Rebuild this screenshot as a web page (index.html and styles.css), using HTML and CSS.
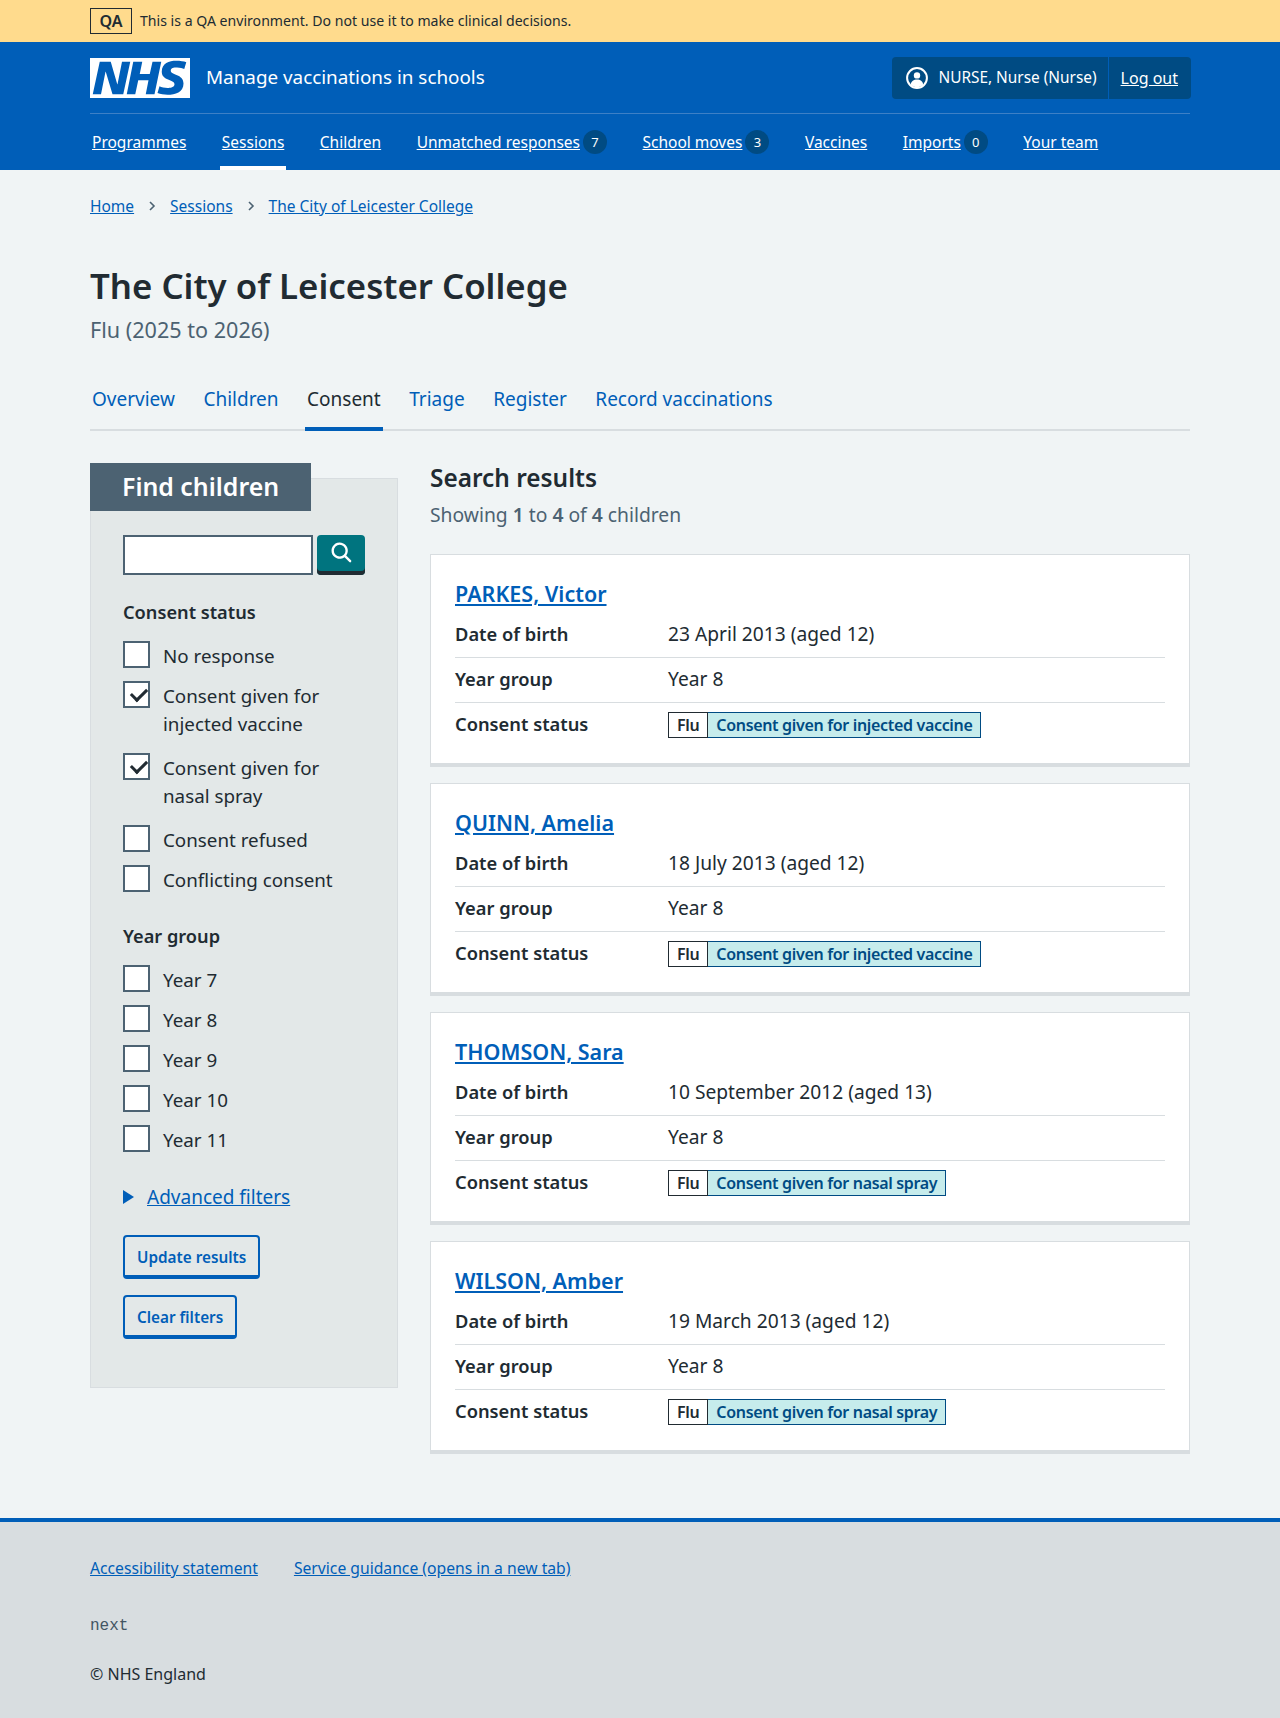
FILE: index.html
```html
<!DOCTYPE html>
<html lang="en">
<head>
<meta charset="utf-8">
<title>The City of Leicester College</title>
<link rel="stylesheet" href="styles.css">
</head>
<body>
<div class="env"><div class="wrap env-in"><strong class="env-tag">QA</strong><span class="env-text">This is a QA environment. Do not use it to make clinical decisions.</span></div></div>
<header class="head">
  <div class="wrap">
    <div class="head-top">
      <a class="brand" href="#">
        <svg class="logo" viewBox="0 0 40 16" aria-label="NHS"><path fill="#fff" d="M0 0h40v16H0z"/><path fill="#005eb8" d="M3.9 1.5h4.4l2.6 9h.1l1.8-9h3.3l-2.8 13H9l-2.7-9h-.1l-1.8 9H1.1M17.3 1.5h3.6l-1 4.9h4L25 1.5h3.5l-2.7 13h-3.5l1.1-5.6h-4.1l-1.2 5.6h-3.4M37.7 4.4c-.7-.3-1.6-.6-2.9-.6-1.4 0-2.5.2-2.5 1.3 0 1.8 5.1 1.2 5.1 5.1 0 3.6-3.3 4.5-6.4 4.5-1.3 0-2.9-.3-4-.7l.8-2.7c.7.4 2.1.7 3.2.7s2.8-.2 2.8-1.5c0-2.1-5.1-1.3-5.1-5 0-3.4 2.9-4.4 5.8-4.4 1.6 0 3.1.2 4 .6"/></svg>
        <span class="brand-name">Manage vaccinations in schools</span>
      </a>
      <div class="account">
        <span class="account-user">
          <svg class="user-icon" viewBox="0 0 22 22"><circle cx="11" cy="11" r="9.9" fill="none" stroke="#fff" stroke-width="2"/><circle cx="11" cy="8.4" r="3.2" fill="#fff"/><path fill="#fff" d="M4.8 17.6c.4-3.4 3-5 6.2-5s5.800 1.600 6.200 5c-1.600 1.700-3.800 2.700-6.200 2.700s-4.600-1-6.200-2.700z"/></svg>
          NURSE, Nurse (Nurse)
        </span>
        <a class="account-link" href="#">Log out</a>
      </div>
    </div>
    <nav class="nav">
      <a class="nav-item" href="#"><span class="nav-text">Programmes</span></a>
      <a class="nav-item is-active" href="#"><span class="nav-text">Sessions</span></a>
      <a class="nav-item" href="#"><span class="nav-text">Children</span></a>
      <a class="nav-item" href="#"><span class="nav-text">Unmatched responses</span><span class="count">7</span></a>
      <a class="nav-item" href="#"><span class="nav-text">School moves</span><span class="count">3</span></a>
      <a class="nav-item" href="#"><span class="nav-text">Vaccines</span></a>
      <a class="nav-item" href="#"><span class="nav-text">Imports</span><span class="count">0</span></a>
      <a class="nav-item" href="#"><span class="nav-text">Your team</span></a>
    </nav>
  </div>
</header>
<div class="wrap">
  <nav class="crumbs">
    <a href="#">Home</a><svg class="crumb-sep" viewBox="0 0 8 12"><path d="M2 2l4 4-4 4" fill="none" stroke="#4c6272" stroke-width="1.6"/></svg>
    <a href="#">Sessions</a><svg class="crumb-sep" viewBox="0 0 8 12"><path d="M2 2l4 4-4 4" fill="none" stroke="#4c6272" stroke-width="1.6"/></svg>
    <a href="#">The City of Leicester College</a>
  </nav>
  <main>
    <h1 class="title">The City of Leicester College</h1>
    <p class="subtitle">Flu (2025 to 2026)</p>
    <nav class="tabs">
      <a class="tab" href="#">Overview</a>
      <a class="tab" href="#">Children</a>
      <a class="tab is-current" href="#">Consent</a>
      <a class="tab" href="#">Triage</a>
      <a class="tab" href="#">Register</a>
      <a class="tab" href="#">Record vaccinations</a>
    </nav>
    <div class="layout">
      <aside class="filters">
        <h2 class="filters-title">Find children</h2>
        <div class="filters-body">
          <div class="search">
            <input class="search-input" type="text" aria-label="Search">
            <button class="search-btn" aria-label="Search"><svg viewBox="0 0 24 24"><path fill="#fff" d="M19.710 18.290l-4.110-4.100a7 7 0 1 0-1.410 1.410l4.100 4.110a1 1 0 0 0 1.420 0 1 1 0 0 0 0-1.420zM5 10a5 5 0 1 1 5 5 5 5 0 0 1-5-5z"/></svg></button>
          </div>
          <h3 class="group-title">Consent status</h3>
          <div class="checks">
            <label class="check"><span class="box"></span><span class="check-label">No response</span></label>
            <label class="check check-long"><span class="box is-on"></span><span class="check-label">Consent given for injected vaccine</span></label>
            <label class="check check-long"><span class="box is-on"></span><span class="check-label">Consent given for nasal spray</span></label>
            <label class="check"><span class="box"></span><span class="check-label">Consent refused</span></label>
            <label class="check"><span class="box"></span><span class="check-label">Conflicting consent</span></label>
          </div>
          <h3 class="group-title group-second">Year group</h3>
          <div class="checks">
            <label class="check"><span class="box"></span><span class="check-label">Year 7</span></label>
            <label class="check"><span class="box"></span><span class="check-label">Year 8</span></label>
            <label class="check"><span class="box"></span><span class="check-label">Year 9</span></label>
            <label class="check"><span class="box"></span><span class="check-label">Year 10</span></label>
            <label class="check"><span class="box"></span><span class="check-label">Year 11</span></label>
          </div>
          <div class="advanced"><span class="arrow"></span><a href="#">Advanced filters</a></div>
          <a class="btn btn-first" href="#">Update results</a>
          <a class="btn" href="#">Clear filters</a>
        </div>
      </aside>
      <section class="results">
        <h2 class="results-title">Search results</h2>
        <p class="results-count">Showing <b>1</b> to <b>4</b> of <b>4</b> children</p>
        <article class="card">
          <h3 class="card-name"><a href="#">PARKES, Victor</a></h3>
          <dl class="rows">
            <div class="row"><dt>Date of birth</dt><dd>23 April 2013 (aged 12)</dd></div>
            <div class="row"><dt>Year group</dt><dd>Year 8</dd></div>
            <div class="row row-last"><dt>Consent status</dt><dd><span class="tag-pair"><span class="tag-a">Flu</span><span class="tag-b">Consent given for injected vaccine</span></span></dd></div>
          </dl>
        </article>
        <article class="card">
          <h3 class="card-name"><a href="#">QUINN, Amelia</a></h3>
          <dl class="rows">
            <div class="row"><dt>Date of birth</dt><dd>18 July 2013 (aged 12)</dd></div>
            <div class="row"><dt>Year group</dt><dd>Year 8</dd></div>
            <div class="row row-last"><dt>Consent status</dt><dd><span class="tag-pair"><span class="tag-a">Flu</span><span class="tag-b">Consent given for injected vaccine</span></span></dd></div>
          </dl>
        </article>
        <article class="card">
          <h3 class="card-name"><a href="#">THOMSON, Sara</a></h3>
          <dl class="rows">
            <div class="row"><dt>Date of birth</dt><dd>10 September 2012 (aged 13)</dd></div>
            <div class="row"><dt>Year group</dt><dd>Year 8</dd></div>
            <div class="row row-last"><dt>Consent status</dt><dd><span class="tag-pair"><span class="tag-a">Flu</span><span class="tag-b">Consent given for nasal spray</span></span></dd></div>
          </dl>
        </article>
        <article class="card">
          <h3 class="card-name"><a href="#">WILSON, Amber</a></h3>
          <dl class="rows">
            <div class="row"><dt>Date of birth</dt><dd>19 March 2013 (aged 12)</dd></div>
            <div class="row"><dt>Year group</dt><dd>Year 8</dd></div>
            <div class="row row-last"><dt>Consent status</dt><dd><span class="tag-pair"><span class="tag-a">Flu</span><span class="tag-b">Consent given for nasal spray</span></span></dd></div>
          </dl>
        </article>
      </section>
    </div>
  </main>
</div>
<footer class="foot">
  <div class="wrap">
    <div class="foot-links"><a href="#">Accessibility statement</a><a href="#">Service guidance (opens in a new tab)</a></div>
    <p class="foot-version">next</p>
    <p class="foot-copy">© NHS England</p>
  </div>
</footer>
</body>
</html>
```
FILE: styles.css
```css
* { box-sizing: border-box; }
html, body { margin: 0; padding: 0; }
body {
  background: #f0f4f5;
  color: #212b32;
  font-family: "Noto Sans", "Open Sans", sans-serif;
  font-size: 19.2px;
  line-height: 24px;
}
a { color: #005eb8; }
.wrap { width: 1100px; margin: 0 auto; }

.env { background: #ffdb8d; height: 42px; }
.env-in { display: flex; align-items: center; height: 42px; }
.env-tag { border: 1px solid #212b32; width: 42px; height: 26px; line-height: 24px; text-align: center; font-size: 16px; font-weight: 600; }
.env-text { margin-left: 8px; font-size: 14.1px; color: #212b32; }

.head { background: #005eb8; height: 128px; color: #fff; }
.head a { color: #fff; }
.head-top { display: flex; align-items: center; justify-content: space-between; height: 72px; border-bottom: 1px solid #3d80c6; padding-top: 15px; padding-bottom: 14px; }
.brand { display: flex; align-items: center; text-decoration: none; }
.logo { width: 100px; height: 40px; display: block; }
.brand-name { margin-left: 16px; margin-bottom: 2px; font-size: 18.85px; }
.account { display: flex; align-items: center; height: 42px; margin-right: -1px; background: #004b83; border-radius: 4px; font-size: 16px; }
.account-user { display: flex; align-items: center; gap: 10px; height: 42px; padding: 0 11px 0 14px; border-right: 1px solid #005eb8; font-size: 15.4px; }
.user-icon { width: 22px; height: 22px; display: block; }
.account-link { padding: 0 13px 0 12px; }

.nav { display: flex; height: 56px; }
.nav-item { display: flex; align-items: center; gap: 3px; height: 56px; padding: 0 2px; margin-right: 31.5px; font-size: 15.5px; position: relative; text-decoration: none; }
.nav-text { text-decoration: underline; }
.nav-item.is-active::after { content: ""; position: absolute; left: 0; right: 0; bottom: 0; height: 4px; background: #fff; }
.count { display: block; width: 24px; height: 24px; border-radius: 50%; background: #004b83; font-size: 13px; line-height: 24px; text-align: center; }

.crumbs { display: flex; align-items: center; height: 24px; margin-top: 24px; font-size: 15.5px; }
.crumb-sep { width: 8px; height: 12px; margin: 0 14px; }

.title { margin: 44px 0 0; font-size: 34.8px; line-height: 48px; font-weight: 600; }
.subtitle { margin: 4px 0 0; font-size: 21.6px; line-height: 32px; color: #4c6272; }

.tabs { display: flex; gap: 24.5px; margin-top: 29px; height: 56px; border-bottom: 2px solid #d8dde0; }
.tab { display: block; height: 56px; padding: 10px 2px 0; font-size: 19px; line-height: 28px; text-decoration: none; }
.tab.is-current { color: #212b32; border-bottom: 4px solid #005eb8; }

.layout { display: grid; grid-template-columns: 308px 1fr; gap: 32px; margin-top: 32px; }
.filters { position: relative; padding-top: 15px; }
.filters-title { position: absolute; left: 0; top: 0; margin: 0; width: 221px; height: 48px; padding-left: 32px; background: #4c6272; color: #fff; font-size: 24.9px; line-height: 46px; font-weight: 600; }
.filters-body { background: #e3e8e8; border: 1px solid #d8dde0; height: 910px; padding: 56px 32px 0; }
.search { display: flex; gap: 4px; }
.search-input { width: 190px; height: 40px; border: 2px solid #4c6272; background: #fff; border-radius: 0; padding: 0; }
.search-btn { width: 48px; height: 40px; border: 0; padding: 0; background: #00747f; border-radius: 4px; box-shadow: inset 0 -4px 0 #212b32; display: flex; align-items: center; justify-content: center; }
.search-btn svg { width: 28px; height: 28px; display: block; margin-left: 2px; margin-bottom: 4px; }
.group-title { margin: 25px 0 0; font-size: 18.2px; line-height: 24px; font-weight: 600; }
.group-second { margin-top: 19px; }
.checks { display: flex; flex-direction: column; margin-top: 17px; }
.check { display: flex; align-items: flex-start; gap: 13px; }
.box { flex: none; width: 27px; height: 27px; border: 2px solid #4c6272; background: #fff; position: relative; }
.box.is-on::after { content: ""; position: absolute; left: 6px; top: 5px; width: 13px; height: 7px; border-left: 3px solid #212b32; border-bottom: 3px solid #212b32; transform: rotate(-45deg); }
.check-label { font-size: 18.8px; line-height: 28px; padding: 1px 0 11px; }
.check-long .check-label { padding-bottom: 15px; }
.advanced { display: flex; align-items: center; margin-top: 18px; font-size: 19px; line-height: 28px; }
.arrow { width: 0; height: 0; border-left: 11px solid #005eb8; border-top: 7px solid transparent; border-bottom: 7px solid transparent; margin-right: 13px; }
.btn { display: table; margin-top: 16px; padding: 8px 12px 6px; border: 2px solid #005eb8; border-bottom-width: 4px; border-radius: 4px; font-size: 15.3px; line-height: 24px; font-weight: 600; text-decoration: none; }
.btn-first { margin-top: 24px; }

.results-title { margin: 0; font-size: 24.4px; line-height: 30px; font-weight: 600; }
.results-count { margin: 8px 0 0; font-size: 19.3px; line-height: 28px; color: #4c6272; }
.results-count b { font-weight: 600; }
.card { background: #fff; border: 1px solid #d8dde0; border-bottom-width: 4px; height: 213px; margin-top: 16px; padding: 25px 24px 0; }
.results-count + .card { margin-top: 25px; }
.card-name { margin: 0; font-size: 21.5px; line-height: 28px; font-weight: 600; }
.rows { margin: 5px 0 0; }
.row { display: flex; border-bottom: 1px solid #d8dde0; padding: 9px 0 0; height: 45px; }
.row-last { border-bottom: 0; }
.row dt { width: 213px; font-size: 18.3px; font-weight: 600; }
.row dd { margin: 0; }
.tag-pair { display: inline-flex; font-size: 16px; line-height: 24px; font-weight: 600; letter-spacing: -.33px; }
.tag-a { border: 1px solid #212b32; background: #fff; padding: 0 8px; }
.tag-b { border: 1px solid #004b83; border-left: 0; background: #c6ecec; color: #004b83; padding: 0 8px; }

.foot { margin-top: 64px; border-top: 4px solid #005eb8; background: #d8dde0; height: 200px; padding-top: 34px; }
.foot-links { display: flex; gap: 36px; font-size: 15.7px; }
.foot-version { margin: 34px 0 0; font-family: "Liberation Mono", monospace; font-size: 16px; color: #425563; }
.foot-copy { margin: 24px 0 0; font-size: 16px; }
```
